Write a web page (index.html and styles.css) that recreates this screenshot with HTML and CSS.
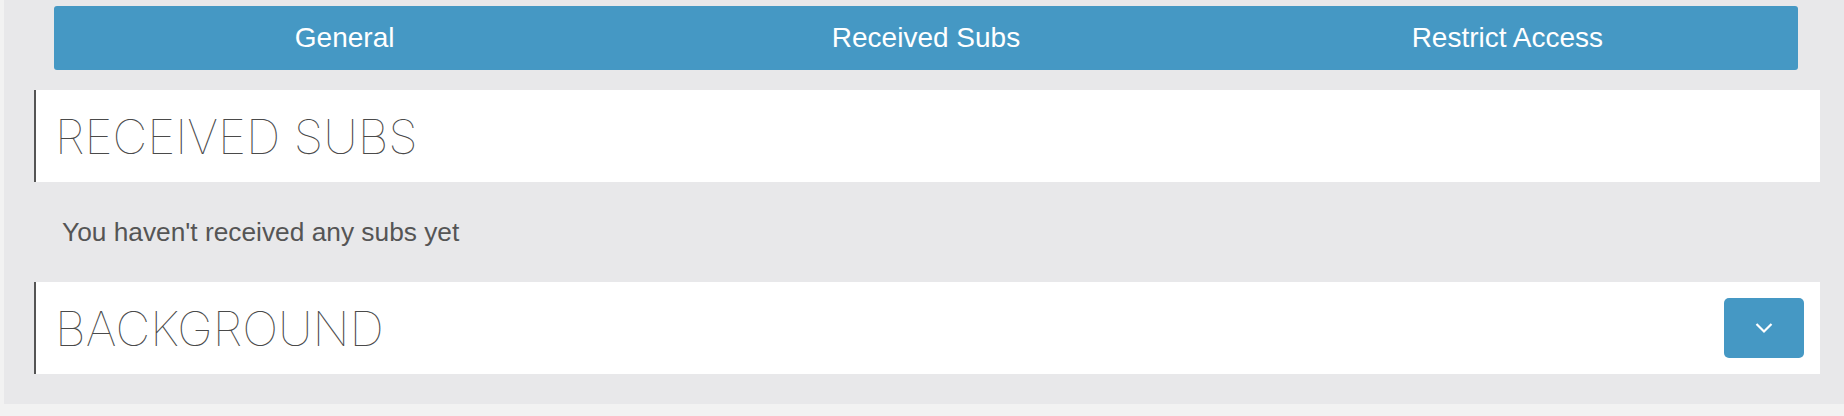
FILE: index.html
```html
<!DOCTYPE html>
<html lang="en">
<head>
    <meta charset="UTF-8">
    <meta name="viewport" content="width=device-width, initial-scale=1.0">
    <title>Received Subs</title>
    <link rel="stylesheet" href="styles.css">
</head>
<body>
    <div class="panel">
        <!-- tabs -->
        <nav class="tab-bar">
            <a class="tab" href="#">General</a>
            <a class="tab" href="#">Received Subs</a>
            <a class="tab" href="#">Restrict Access</a>
        </nav>

        <div class="section-header">
            <h2 class="section-title">RECEIVED SUBS</h2>
        </div>
        <p class="empty-message">You haven't received any subs yet</p>

        <div class="section-header">
            <h2 class="section-title">BACKGROUND</h2>
            <button class="toggle-button" type="button" aria-label="Expand">
                <svg width="18" height="12" viewBox="0 0 18 12">
                    <polyline points="1.5,2 9,9.5 16.5,2" fill="none" stroke="#fff" stroke-width="2.2"/>
                </svg>
            </button>
        </div>
    </div>
</body>
</html>
```

FILE: styles.css
```css
body {
    margin: 0;
    background-color: #f2f2f2;
    font-family: "Liberation Sans", Arial, sans-serif;
    color: #555;
}

.panel {
    margin-left: 4px;
    padding: 6px 24px 30px 30px;
    background-color: #e8e8ea;
}

.tab-bar {
    display: flex;
    height: 64px;
    margin: 0 22px 0 20px;
    background-color: #4598c4;
    border-radius: 3px;
}
.tab {
    flex: 1;
    display: flex;
    align-items: center;
    justify-content: center;
    color: #fff;
    font-size: 28px;
    text-decoration: none;
}

.section-header {
    display: flex;
    align-items: center;
    justify-content: space-between;
    height: 92px;
    padding: 0 16px 0 19px;
    background-color: #fff;
    border-left: 2px solid #555;
}
.tab-bar + .section-header {
    margin-top: 20px;
}
.section-title {
    margin: 0;
    font-family: "Inter", "Liberation Sans", sans-serif;
    font-weight: 120;
    font-size: 48px;
    color: #4a4a4a;
}

.empty-message {
    margin: 0;
    height: 100px;
    padding-left: 28px;
    font-size: 26.3px;
    line-height: 100px;
    color: #555;
}

.toggle-button {
    display: flex;
    align-items: center;
    justify-content: center;
    width: 80px;
    height: 60px;
    padding: 0;
    border: none;
    border-radius: 5px;
    background-color: #4598c4;
    cursor: pointer;
}
```
